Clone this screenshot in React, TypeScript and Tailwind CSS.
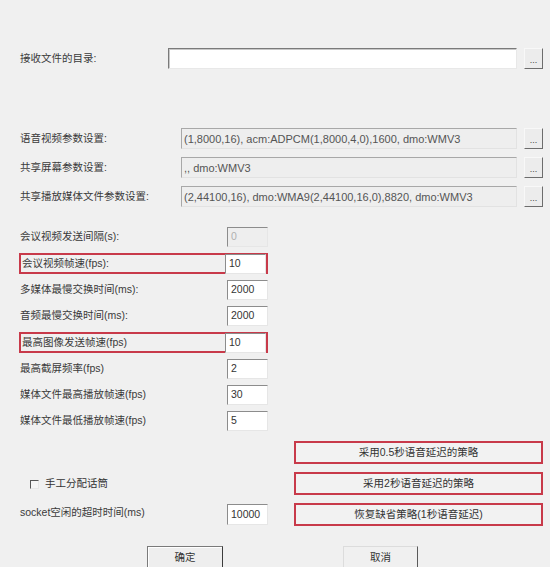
import React from "react";

const FONT = '"Liberation Sans", "Noto Sans CJK SC", sans-serif';

function DotsButton() {
  return (
    <div className="ml-[7px] flex h-[21px] w-[19px] flex-none items-end justify-center border border-t-[#f8f8f8] border-l-[#f8f8f8] border-r-[#6d6d6d] border-b-[#6d6d6d] bg-[#ececec] pb-[3px] text-[9px] leading-none text-[#444]">
      ...
    </div>
  );
}

function ParamRow({ label, value }: { label: string; value: string }) {
  return (
    <div className="flex h-[21px] items-center">
      <div className="w-[161px] flex-none">{label}</div>
      <div className="flex h-full w-[336px] flex-none items-center border border-t-[#a8a8a8] border-l-[#a8a8a8] border-r-[#e2e2e2] border-b-[#e2e2e2] bg-[#eeeeee] pl-[2px] pt-[1px] text-[11px] text-[#555]">
        {value}
      </div>
      <DotsButton />
    </div>
  );
}

function SmallRow({
  label,
  value,
  marked,
  disabled,
}: {
  label: string;
  value: string;
  marked?: boolean;
  disabled?: boolean;
}) {
  const field = (
    <div
      className={`flex h-[20px] w-[41px] flex-none items-center border border-t-[#8c8c8c] border-l-[#8c8c8c] border-r-[#e6e6e6] border-b-[#e6e6e6] pl-[3px] ${
        disabled ? "bg-[#eeeeee] text-[#b0b0b0]" : "bg-white text-[#333]"
      }`}
    >
      {value}
    </div>
  );
  if (marked) {
    return (
      <div className="-ml-[1px] flex h-[21px] w-[249px] items-center justify-between border-2 border-[#c83a4a]">
        <span className="pl-[1px]">{label}</span>
        {field}
      </div>
    );
  }
  return (
    <div className="flex h-[20px] w-[248px] items-center justify-between">
      <span>{label}</span>
      {field}
    </div>
  );
}

function RedButton({ text }: { text: string }) {
  return (
    <div className="flex h-[23px] w-[249px] items-center justify-center border-2 border-[#c83a4a] bg-[#f2f2f2] text-[#333]">
      {text}
    </div>
  );
}

export default function App() {
  return (
    <div
      className="relative h-[567px] w-[550px] overflow-hidden bg-[#f0f0f0] text-[10.5px] text-[#3a3a3a]"
      style={{ fontFamily: FONT }}
    >
      <div className="pl-[20px] pt-[48px]">
        {/* directory */}
        <div className="flex h-[21px] items-center">
          <div className="w-[148px] flex-none">接收文件的目录:</div>
          <div className="h-full w-[349px] flex-none border border-t-[#7a7a7a] border-l-[#7a7a7a] border-r-[#e8e8e8] border-b-[#e8e8e8] bg-white shadow-[inset_1px_1px_0_#c8c8c8]" />
          <DotsButton />
        </div>

        {/* media params */}
        <div className="mt-[59px] flex flex-col gap-[8px]">
          <ParamRow
            label="语音视频参数设置:"
            value="(1,8000,16), acm:ADPCM(1,8000,4,0),1600, dmo:WMV3"
          />
          <ParamRow label="共享屏幕参数设置:" value=",, dmo:WMV3" />
          <ParamRow
            label="共享播放媒体文件参数设置:"
            value="(2,44100,16), dmo:WMA9(2,44100,16,0),8820, dmo:WMV3"
          />
        </div>

        {/* numeric settings */}
        <div className="mt-[20px] flex flex-col gap-[6px]">
          <SmallRow label="会议视频发送间隔(s):" value="0" disabled />
          <SmallRow label="会议视频帧速(fps):" value="10" marked />
          <SmallRow label="多媒体最慢交换时间(ms):" value="2000" />
          <SmallRow label="音频最慢交换时间(ms):" value="2000" />
          <SmallRow label="最高图像发送帧速(fps)" value="10" marked />
          <SmallRow label="最高截屏频率(fps)" value="2" />
          <SmallRow label="媒体文件最高播放帧速(fps)" value="30" />
          <SmallRow label="媒体文件最低播放帧速(fps)" value="5" />
        </div>

        {/* strategy + socket */}
        <div className="mt-[10px] flex">
          <div className="w-[274px] flex-none">
            <div className="ml-[10px] mt-[38px] flex h-[10px] items-center gap-[6px]">
              <div className="h-[9px] w-[9px] border border-t-[#555] border-l-[#555] border-r-[#e6e6e6] border-b-[#e6e6e6] bg-[#f4f4f4]" />
              <span className="text-[#333]">手工分配话筒</span>
            </div>
            <div className="mt-[15px] flex h-[21px] w-[248px] items-center justify-between">
              <span className="-mt-[4px]">socket空闲的超时时间(ms)</span>
              <div className="flex h-full w-[41px] items-center border border-t-[#8c8c8c] border-l-[#8c8c8c] border-r-[#e6e6e6] border-b-[#e6e6e6] bg-white pl-[3px] text-[#333]">
                10000
              </div>
            </div>
          </div>
          <div className="flex flex-col gap-[8px]">
            <RedButton text="采用0.5秒语音延迟的策略" />
            <RedButton text="采用2秒语音延迟的策略" />
            <RedButton text="恢复缺省策略(1秒语音延迟)" />
          </div>
        </div>

        {/* dialog buttons */}
        <div className="mt-[20px] flex">
          <div className="ml-[127px] flex h-[24px] w-[76px] items-center justify-center border border-[#7a7a7a] border-b-[#3c3c3c] border-r-[#3c3c3c] bg-[#eeeeee] text-[#333] shadow-[inset_1px_1px_0_#ffffff]">
            确定
          </div>
          <div className="ml-[120px] flex h-[24px] w-[75px] items-center justify-center border border-[#dcdcdc] border-b-[#5a5a5a] border-r-[#5a5a5a] bg-[#f0f0f0] text-[#333]">
            取消
          </div>
        </div>
      </div>
    </div>
  );
}
